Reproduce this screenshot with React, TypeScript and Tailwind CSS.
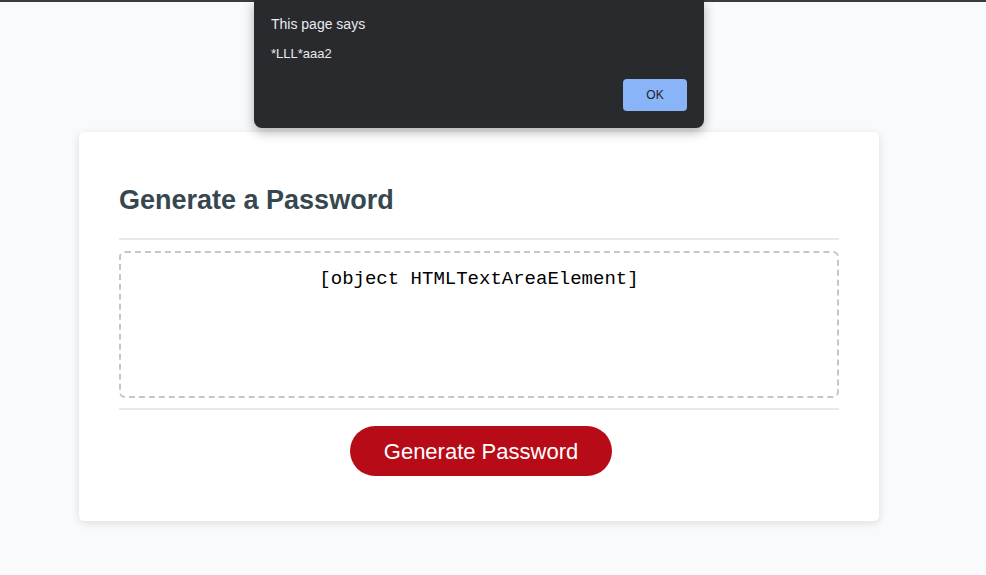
export default function App() {
  return (
    <div className="relative min-h-[575px] w-full overflow-hidden bg-[#f9fafb] font-['Liberation_Sans',Arial,sans-serif]">
      {/* top window edge */}
      <div className="h-[2px] w-full bg-[#3a3b3e]" />

      {/* card */}
      <div className="ml-[79px] mt-[130px] w-[800px] rounded-[5px] bg-white px-10 pt-[53px] pb-[45px] shadow-[0_2px_8px_rgba(0,0,0,0.12)]">
        <h2 className="text-[27px] font-bold leading-[30px] text-[#36474f]">Generate a Password</h2>
        <div className="mt-[23px] h-[2px] bg-[#e8e8e8]" />
        <div className="mt-[11px] flex h-[147px] justify-center rounded-md border-2 border-dashed border-[#c0c7cf] pt-[14px]">
          <span className="font-['Liberation_Mono','Courier_New',monospace] text-[19px] leading-[24px] text-black">
            [object HTMLTextAreaElement]
          </span>
        </div>
        <div className="mt-[10px] h-[2px] bg-[#e8e8e8]" />
        <div className="mt-[16px] flex justify-center pl-[4px]">
          <button className="h-[50px] w-[262px] rounded-full bg-[#b80b18] text-[22px] text-white">
            Generate Password
          </button>
        </div>
      </div>

      {/* alert dialog */}
      <div className="absolute left-[254px] top-0 h-[128px] w-[450px] rounded-b-lg bg-[#292a2d] px-[17px] pt-[15px] shadow-[0_4px_12px_rgba(0,0,0,0.3)]">
        <div className="text-[14px] leading-[18px] text-[#e8eaed]">This page says</div>
        <div className="mt-[13px] text-[13px] font-medium leading-[16px] text-[#e8eaed]">*LLL*aaa2</div>
        <div className="mt-[17px] flex justify-end">
          <button className="h-[32px] w-[64px] rounded bg-[#8ab4f8] text-[12px] text-[#202124]">OK</button>
        </div>
      </div>
    </div>
  );
}
